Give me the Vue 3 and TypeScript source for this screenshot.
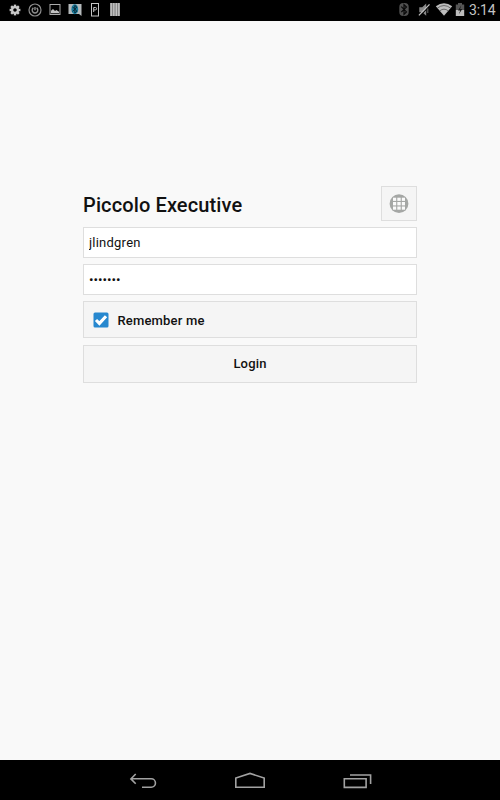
<script setup lang="ts">
import { ref } from 'vue'

const username = ref<string>('jlindgren')
const password = ref<string>('piccolo')
const remember = ref<boolean>(true)
const time = '3:14'
const teeth: number[] = [0, 45, 90, 135, 180, 225, 270, 315]
</script>

<template>
  <div class="screen">
    <header class="status">
      <div class="notifications">
        <svg viewBox="0 0 20 20">
          <g fill="#c9c9c9">
            <rect v-for="a in teeth" :key="a" x="8.8" y="4.6" width="2.4" height="3" :transform="`rotate(${a} 10 10)`" />
          </g>
          <circle cx="10" cy="10" r="2.9" fill="none" stroke="#c9c9c9" stroke-width="2.2" />
        </svg>
        <svg viewBox="0 0 20 20" fill="none" stroke="#8e8e8e">
          <circle cx="10" cy="10" r="6" stroke-width="1.2" />
          <path d="M8.4 7.9a2.8 2.8 0 1 0 3.2 0M10 7v3.2" stroke-width="1.4" />
        </svg>
        <svg viewBox="0 0 20 20">
          <rect x="5" y="4.5" width="10" height="10" fill="none" stroke="#aaa" />
          <path d="M6 13.3v-2.6l2-1.8 2 2 1.4-.8 2.6 1.6v1.6z" fill="#c2c2c2" />
        </svg>
        <svg viewBox="0 0 20 20">
          <path d="M3.5 4h13v12l-2.5-2H3.5z" fill="#b5babc" />
          <ellipse cx="9.8" cy="9.2" rx="3.4" ry="5" fill="#187b9c" />
          <path d="M7.5 6.8l4.4 4.4L9.8 13V5.4l2.1 1.8-4.4 4.2" fill="none" stroke="#092a38" stroke-width="1" />
        </svg>
        <svg viewBox="0 0 20 20" fill="none" stroke="#c4c4c4">
          <rect x="6.5" y="3.5" width="7" height="12.5" />
          <path d="M8.7 12V7.5h1.7a1.2 1.2 0 0 1 0 2.4H8.9" />
        </svg>
        <svg viewBox="0 0 20 20">
          <path d="M5 3h10v13H5z" fill="#858585" />
          <path d="M6.2 3v13M8.8 3v13M11.3 3v13M13.8 3v13" stroke="#c9c9c9" stroke-width="1.2" />
        </svg>
      </div>
      <div class="system">
        <svg viewBox="0 0 20 20">
          <rect x="5.3" y="3" width="9.4" height="13" rx="4" fill="#505050" />
          <path d="M7.3 6.6l5.2 5.3-2.5 2.4V4.7l2.5 2.3-5.2 5.2" fill="none" stroke="#080808" stroke-width="1.2" />
        </svg>
        <svg viewBox="0 0 20 20">
          <path d="M5.3 7.2h2.9L12.2 3.4v12.4L8.2 12.3H5.3z" fill="#888" />
          <path d="M5.8 16.2L16.2 5.4" stroke="#000" stroke-width="1.2" />
          <path d="M4.9 15.4L15.5 4.4" stroke="#c0c0c0" stroke-width="1.3" />
          <path d="M13.8 8.5v4.5" stroke="#666" />
        </svg>
        <svg viewBox="0 0 20 20">
          <path d="M1.8 6.2Q10 .2 18.2 6.2L10 15.8z" fill="#bdbdbd" />
          <path d="M3.4 8.1q6.6-5.1 13.2 0M5.7 10.9q4.3-3.5 8.6 0" fill="none" stroke="#444" stroke-width=".7" />
        </svg>
        <svg class="battery" viewBox="0 0 12 20">
          <path d="M4 3h4v1.4h2.2V10H1.8V4.4H4z" fill="#555" />
          <path d="M1.8 10h8.4v6H1.8z" fill="#bdbdbd" />
          <path d="M7.2 5.3L4 10.4h2.2L4.8 14.2 8.3 9H6.1z" fill="#181818" />
        </svg>
        <span class="clock">{{ time }}</span>
      </div>
    </header>

    <main class="content">
      <form class="login" @submit.prevent>
        <div class="heading">
          <h1>Piccolo Executive</h1>
          <button type="button" class="language" aria-label="Language">
            <svg viewBox="0 0 20 20">
              <circle cx="10" cy="9.7" r="9.4" fill="#a5a7a5" />
              <g fill="#fafafa">
                <rect x="4" y="3.7" width="3.2" height="3.2" />
                <rect x="8.3" y="3.7" width="3.4" height="3.2" />
                <rect x="12.8" y="3.7" width="3.2" height="3.2" />
                <rect x="4" y="8" width="3.2" height="3.4" />
                <rect x="8.3" y="8" width="3.4" height="3.4" />
                <rect x="12.8" y="8" width="3.2" height="3.4" />
                <rect x="4" y="12.5" width="3.2" height="3.2" />
                <rect x="8.3" y="12.5" width="3.4" height="3.2" />
                <rect x="12.8" y="12.5" width="3.2" height="3.2" />
              </g>
            </svg>
          </button>
        </div>
        <input v-model="username" class="field" type="text" spellcheck="false" />
        <input v-model="password" class="field" type="password" />
        <label class="remember">
          <input v-model="remember" type="checkbox" />
          <svg viewBox="0 0 16 16">
            <rect x=".5" y=".5" width="15" height="15" rx="1.5" fill="#2788cf" />
            <path v-if="remember" d="M3 8l3.4 3.4 6.6-7.2" fill="none" stroke="#fff" stroke-width="3.1" />
          </svg>
          <span>Remember me</span>
        </label>
        <button type="submit" class="submit">Login</button>
      </form>
    </main>

    <nav class="navbar">
      <svg viewBox="0 0 32 20">
        <path d="M8.7 4L3.9 8.9l4.8 4.9M4.2 8.7h20a4.2 4.2 0 0 1 0 8.5H15" />
      </svg>
      <svg viewBox="0 0 32 20">
        <path d="M1.8 17.3V8.1L16 3.4l14.2 4.7v9.2z" />
      </svg>
      <svg viewBox="0 0 32 20">
        <path d="M3.3 8.8h21.8v8.6H3.3zM9 5h20.6v9" />
      </svg>
    </nav>
  </div>
</template>

<style>
body {
  margin: 0;
  background: #f9f9f9;
}
</style>

<style scoped>
.screen {
  display: flex;
  flex-direction: column;
  width: 500px;
  height: 800px;
  background: #f9f9f9;
  color: #111;
  font-family: Roboto, "Liberation Sans", sans-serif;
  font-size: 13px;
}

.status {
  display: flex;
  justify-content: space-between;
  box-sizing: border-box;
  height: 21px;
  padding: 0 4px 0 5px;
  background: #000;
}

.notifications,
.system {
  display: flex;
}

.status svg {
  width: 20px;
  height: 20px;
}

.status .battery {
  width: 12px;
}

.clock {
  width: 27px;
  margin-left: 3px;
  color: #c4c4c4;
  font-size: 14px;
  letter-spacing: -0.15px;
  line-height: 20px;
  white-space: nowrap;
}

.content {
  flex: 1;
  padding: 165px 83px 0;
}

.login {
  display: flex;
  flex-direction: column;
}

.heading {
  display: flex;
  align-items: center;
  justify-content: space-between;
  height: 35px;
  margin-bottom: 6px;
}

h1 {
  margin: 3px 0 0;
  font-size: 20px;
  font-weight: 500;
  line-height: 24px;
  letter-spacing: 0.12px;
}

button,
.field,
.remember {
  box-sizing: border-box;
  border: 1px solid #dedede;
  border-radius: 0;
  background: #f5f5f5;
  color: #111;
  font-family: inherit;
  font-size: 13px;
}

.language {
  display: flex;
  align-items: center;
  justify-content: center;
  width: 36px;
  height: 35px;
  padding: 0;
}

.language svg {
  width: 20px;
  height: 20px;
}

.field {
  height: 31px;
  margin: 0 0 6px;
  padding: 0 5px;
  background: #fff;
  outline: none;
}

.field[type="text"] {
  letter-spacing: 0.23px;
}

.field[type="password"] {
  font-size: 13.4px;
}

.remember {
  display: flex;
  align-items: center;
  height: 37px;
  padding: 0 9px;
  font-weight: 500;
  letter-spacing: 0.17px;
}

.remember span {
  padding-top: 1px;
}

.remember input {
  display: none;
}

.remember svg {
  width: 16px;
  height: 16px;
  margin-right: 8.5px;
}

.submit {
  height: 38px;
  margin-top: 7px;
  padding: 0 0 2px;
  font-weight: 500;
  letter-spacing: 0.17px;
}

.navbar {
  display: flex;
  align-items: center;
  justify-content: center;
  gap: 75px;
  height: 40px;
  background: #000;
}

.navbar svg {
  width: 32px;
  height: 20px;
  fill: none;
  stroke: #a2a2a2;
  stroke-width: 1.6;
}
</style>
